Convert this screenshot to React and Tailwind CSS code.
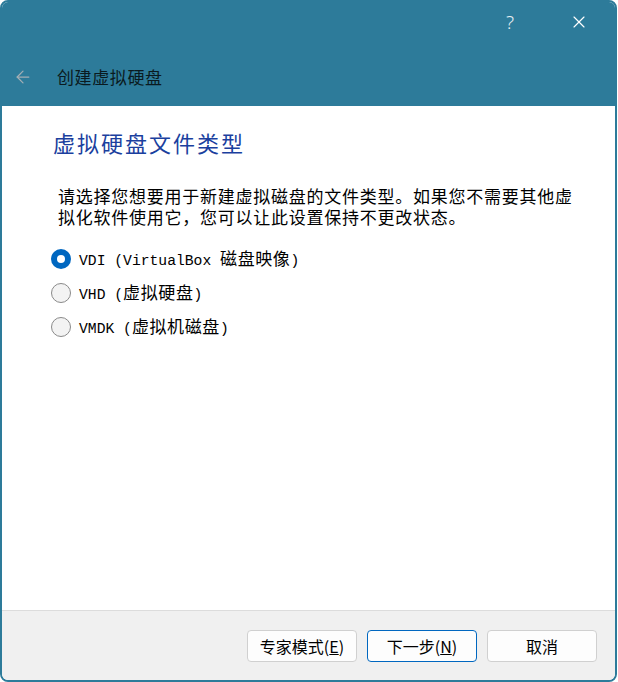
import { ArrowLeft, X } from 'lucide-react';

const cjk = "font-['Noto_Sans_CJK_SC',sans-serif]";
const mono = "font-['Liberation_Mono','Noto_Sans_CJK_SC',monospace]";

function Radio({ checked, children }) {
  return (
    <label className="flex items-center gap-[8px] h-[34px]">
      {checked ? (
        <span className="w-[20px] h-[20px] rounded-full bg-[#0067c0] flex items-center justify-center">
          <span className="w-[8px] h-[8px] rounded-full bg-white" />
        </span>
      ) : (
        <span className="w-[20px] h-[20px] rounded-full border border-[#8a8a8a] bg-[#f3f3f3]" />
      )}
      <span className="text-black whitespace-nowrap">{children}</span>
    </label>
  );
}

function Button({ primary, children }) {
  return (
    <button
      className={`w-[110px] h-[32px] rounded-[4px] bg-[#fdfdfd] text-[16px] text-black ${cjk} ${
        primary ? 'border border-[#0067c0]' : 'border border-[#d0d0d0]'
      }`}
    >
      {children}
    </button>
  );
}

export default function App() {
  return (
    <div className="w-[618px] h-[682px] bg-white">
      <div className="w-[617px] h-[682px] flex flex-col rounded-[8px] border-2 border-[#2d7b9a] overflow-hidden bg-white">
        {/* Header */}
        <div className="bg-[#2d7b9a] h-[104px] flex flex-col">
          <div className="h-[40px] shrink-0 flex justify-end items-center pr-[26px] gap-[55px]">
            <span className="text-[#e6eef2] text-[19px] font-['Noto_Sans',sans-serif] font-light">?</span>
            <X size={20} strokeWidth={1.4} color="#ffffff" />
          </div>
          <div className="flex items-center h-[64px] shrink-0 pl-[11px] pt-[6px]">
            <ArrowLeft size={20} strokeWidth={1.5} color="#a3aeb4" />
            <span className={`ml-[24px] text-[17px] tracking-[0.6px] text-[#0a1a20] ${cjk}`}>创建虚拟硬盘</span>
          </div>
        </div>

        {/* Content */}
        <div className="flex-1 pl-[51px] pr-[30px] pt-[21px]">
          <h1 className={`text-[22px] tracking-[2px] text-[#1b3f9e] leading-[30px] ${cjk}`}>虚拟硬盘文件类型</h1>
          <p className={`mt-[28px] pl-[5px] text-[17px] tracking-[0.75px] leading-[21px] text-black ${cjk}`}>
            请选择您想要用于新建虚拟磁盘的文件类型。如果您不需要其他虚拟化软件使用它，您可以让此设置保持不更改状态。
          </p>
          <div className="mt-[15px] -ml-[2px] flex flex-col">
            <Radio checked>
              <span className={`${mono} text-[14.7px]`}>VDI (VirtualBox </span>
              <span className={`${cjk} text-[17px] tracking-[0.6px]`}>磁盘映像</span>
              <span className={`${mono} text-[14.7px]`}>)</span>
            </Radio>
            <Radio>
              <span className={`${mono} text-[14.7px]`}>VHD (</span>
              <span className={`${cjk} text-[17px] tracking-[0.6px]`}>虚拟硬盘</span>
              <span className={`${mono} text-[14.7px]`}>)</span>
            </Radio>
            <Radio>
              <span className={`${mono} text-[14.7px]`}>VMDK (</span>
              <span className={`${cjk} text-[17px] tracking-[0.6px]`}>虚拟机磁盘</span>
              <span className={`${mono} text-[14.7px]`}>)</span>
            </Radio>
          </div>
        </div>

        {/* Footer */}
        <div className="h-[70px] bg-[#f0f0f0] border-t border-[#dcdcdc] flex justify-end items-center gap-[10px] pr-[18px]">
          <Button>
            专家模式(<span className="underline">E</span>)
          </Button>
          <Button primary>
            下一步(<span className="underline">N</span>)
          </Button>
          <Button>取消</Button>
        </div>
      </div>
    </div>
  );
}
